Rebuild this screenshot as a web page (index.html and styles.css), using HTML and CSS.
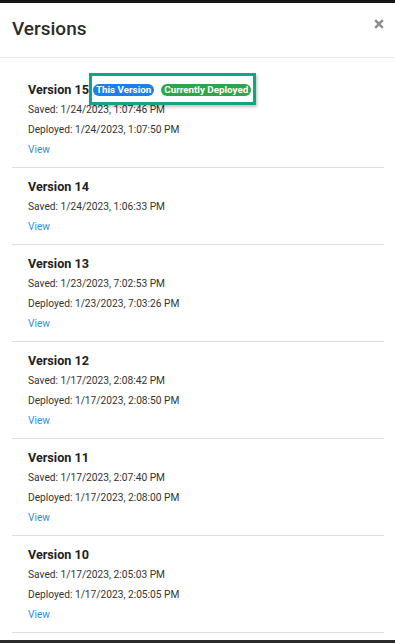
FILE: index.html
```html
<!DOCTYPE html>
<html lang="en">
<head>
<meta charset="utf-8">
<title>Versions</title>
<link rel="stylesheet" href="styles.css">
</head>
<body>
<div class="backdrop-top"></div>
<div class="modal">
  <div class="modal-header">
    <h1 class="modal-title">Versions</h1>
    <button class="close" aria-label="Close">
      <svg width="10" height="10" viewBox="0 0 10 10"><path d="M1.2 1.2 L8.8 8.8 M8.8 1.2 L1.2 8.8" stroke="#8c8c8c" stroke-width="2.4" stroke-linecap="butt"/></svg>
    </button>
  </div>
  <div class="modal-body">
    <div class="version">
      <div class="version-title">Version 15
        <span class="badges">
          <span class="badge badge-blue">This Version</span>
          <span class="badge badge-green">Currently Deployed</span>
          <span class="highlight"></span>
        </span>
      </div>
      <div class="row">Saved: 1/24/2023, 1:07:46 PM</div>
      <div class="row">Deployed: 1/24/2023, 1:07:50 PM</div>
      <div class="row"><a class="link" href="#">View</a></div>
    </div>
    <div class="version">
      <div class="version-title">Version 14</div>
      <div class="row">Saved: 1/24/2023, 1:06:33 PM</div>
      <div class="row"><a class="link" href="#">View</a></div>
    </div>
    <div class="version">
      <div class="version-title">Version 13</div>
      <div class="row">Saved: 1/23/2023, 7:02:53 PM</div>
      <div class="row">Deployed: 1/23/2023, 7:03:26 PM</div>
      <div class="row"><a class="link" href="#">View</a></div>
    </div>
    <div class="version">
      <div class="version-title">Version 12</div>
      <div class="row">Saved: 1/17/2023, 2:08:42 PM</div>
      <div class="row">Deployed: 1/17/2023, 2:08:50 PM</div>
      <div class="row"><a class="link" href="#">View</a></div>
    </div>
    <div class="version">
      <div class="version-title">Version 11</div>
      <div class="row">Saved: 1/17/2023, 2:07:40 PM</div>
      <div class="row">Deployed: 1/17/2023, 2:08:00 PM</div>
      <div class="row"><a class="link" href="#">View</a></div>
    </div>
    <div class="version">
      <div class="version-title">Version 10</div>
      <div class="row">Saved: 1/17/2023, 2:05:03 PM</div>
      <div class="row">Deployed: 1/17/2023, 2:05:05 PM</div>
      <div class="row"><a class="link" href="#">View</a></div>
    </div>
  </div>
</div>
</body>
</html>
```
FILE: styles.css
```css
html, body {
  margin: 0;
  padding: 0;
}
body {
  background: #2a2c2a;
  font-family: Roboto, "Liberation Sans", Arial, sans-serif;
  width: 395px;
  height: 643px;
  overflow: hidden;
}
.backdrop-top {
  height: 3px;
  background: #151515;
}
.modal {
  background: #fff;
  height: 637px;
  overflow: hidden;
}
.modal-header {
  border-bottom: 1px solid #e6e6e6;
  display: flex;
  align-items: flex-start;
  justify-content: space-between;
  padding: 0 11px 0 12px;
  box-sizing: border-box;
  height: 55px;
}
.modal-title {
  margin: 0;
  padding-top: 15px;
  font-size: 19px;
  line-height: 22px;
  font-weight: 500;
  color: #2b2b2b;
}
.close {
  border: 0;
  background: none;
  padding: 0;
  margin-top: 16px;
  width: 10px;
  height: 10px;
  display: flex;
}
.modal-body {
  padding: 13px 11px 0 12px;
}
.version {
  padding: 8px 16px 7px;
  border-bottom: 1px solid #dedede;
}
.version-title {
  font-size: 12.6px;
  font-weight: 700;
  line-height: 21px;
  color: #222;
  display: flex;
  align-items: center;
}
.badges {
  position: relative;
  display: inline-flex;
  gap: 7px;
  margin-left: 4px;
}
.badge {
  font-size: 9.8px;
  font-weight: 700;
  color: #fff;
  line-height: 12px;
  height: 12px;
  padding: 0 3px;
  border-radius: 7px;
}
.badge-blue {
  background: #1a7ff0;
}
.badge-green {
  background: #2ba64a;
}
.highlight {
  position: absolute;
  top: -11px;
  left: -4px;
  right: -5px;
  bottom: -9px;
  border: 3px solid #15a386;
  box-shadow: 1px 2px 3px rgba(0, 0, 0, 0.25);
}
.row {
  font-size: 10.2px;
  line-height: 20px;
  color: #333;
}
.link {
  color: #2f92d8;
  text-decoration: none;
}
```
